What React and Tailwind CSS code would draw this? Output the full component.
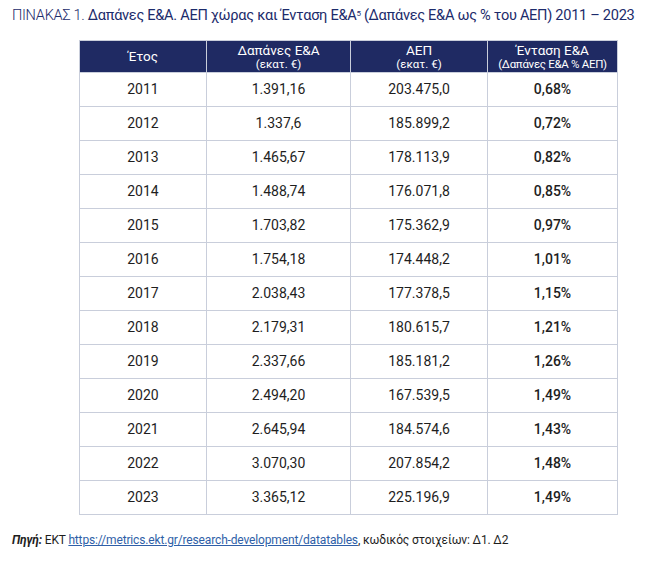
const rows = [
  ["2011", "1.391,16", "203.475,0", "0,68%"],
  ["2012", "1.337,6", "185.899,2", "0,72%"],
  ["2013", "1.465,67", "178.113,9", "0,82%"],
  ["2014", "1.488,74", "176.071,8", "0,85%"],
  ["2015", "1.703,82", "175.362,9", "0,97%"],
  ["2016", "1.754,18", "174.448,2", "1,01%"],
  ["2017", "2.038,43", "177.378,5", "1,15%"],
  ["2018", "2.179,31", "180.615,7", "1,21%"],
  ["2019", "2.337,66", "185.181,2", "1,26%"],
  ["2020", "2.494,20", "167.539,5", "1,49%"],
  ["2021", "2.645,94", "184.574,6", "1,43%"],
  ["2022", "3.070,30", "207.854,2", "1,48%"],
  ["2023", "3.365,12", "225.196,9", "1,49%"],
];

export default function App() {
  return (
    <div className="h-[563px] w-[649px] overflow-hidden bg-white font-['Roboto',sans-serif] text-[#1e1e1e]">
      <h1 className="whitespace-nowrap pl-[12px] pt-[6px] text-[14.6px] leading-[18px] tracking-[-0.3px] text-[#1c2b6b]">
        <span className="font-light">ΠΙΝΑΚΑΣ 1.</span> Δαπάνες Ε&Α. ΑΕΠ χώρας και Ένταση Ε&Α
        <sup className="text-[8px]">5</sup> (Δαπάνες Ε&Α ως % του ΑΕΠ) 2011 – 2023
      </h1>

      <table className="ml-[79px] mt-[16px] w-[538px] table-fixed border-collapse">
        <colgroup>
          <col className="w-[127px]" />
          <col className="w-[144px]" />
          <col className="w-[137px]" />
          <col className="w-[130px]" />
        </colgroup>
        <thead>
          <tr className="h-[32px] bg-[#1f2a63] text-center text-white">
            <th className="border border-[#c9cedb] text-[13.5px] font-normal">Έτος</th>
            <th className="border border-[#c9cedb] text-[13.5px] font-normal leading-[14px]">
              Δαπάνες Ε&Α
              <div className="text-[11.5px]">(εκατ. €)</div>
            </th>
            <th className="border border-[#c9cedb] text-[13.5px] font-normal leading-[14px]">
              ΑΕΠ
              <div className="text-[11.5px]">(εκατ. €)</div>
            </th>
            <th className="border border-[#c9cedb] text-[13.5px] font-normal leading-[14px]">
              Ένταση Ε&Α
              <div className="text-[11.5px] tracking-[-0.3px]">(Δαπάνες Ε&Α % ΑΕΠ)</div>
            </th>
          </tr>
        </thead>
        <tbody>
          {rows.map((r) => (
            <tr key={r[0]} className="h-[34px] text-center text-[14px]">
              <td className="border border-[#c9cedb]">{r[0]}</td>
              <td className="border border-[#c9cedb]">{r[1]}</td>
              <td className="border border-[#c9cedb]">{r[2]}</td>
              <td className="border border-[#c9cedb] font-medium">{r[3]}</td>
            </tr>
          ))}
        </tbody>
      </table>

      <p className="mt-[16px] whitespace-nowrap pl-[12px] text-[12px] tracking-[-0.15px]">
        <span className="font-bold italic">Πηγή:</span> ΕΚΤ{" "}
        <a className="text-[#2f5fa8] underline" href="#">
          https://metrics.ekt.gr/research-development/datatables
        </a>
        , κωδικός στοιχείων: Δ1. Δ2
      </p>
    </div>
  );
}
